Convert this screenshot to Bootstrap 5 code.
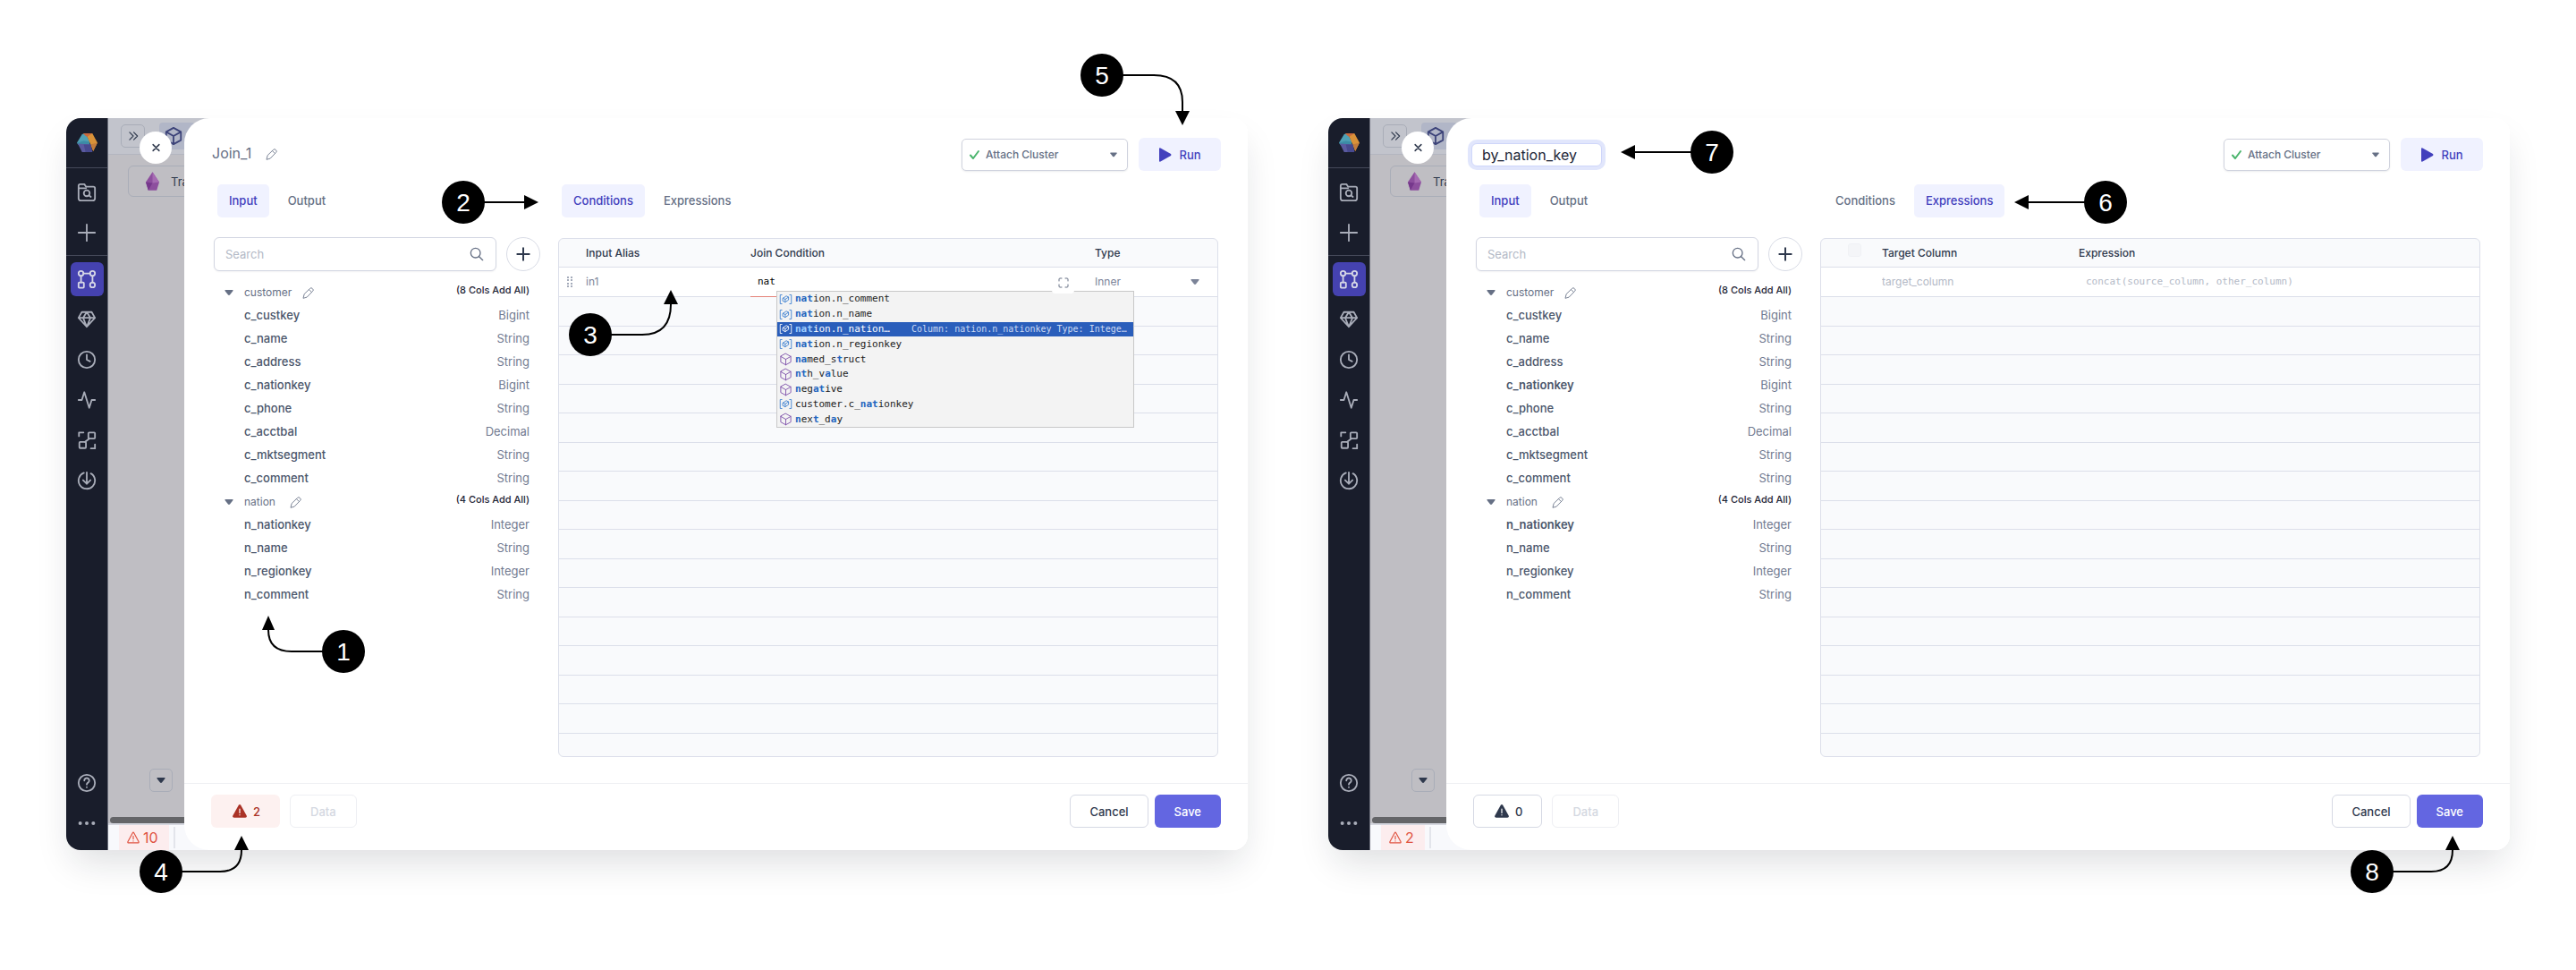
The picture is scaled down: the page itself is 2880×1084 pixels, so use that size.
<!DOCTYPE html>
<html lang="en">
<head>
<meta charset="utf-8">
<meta name="viewport" content="width=device-width, initial-scale=1">
<title>Join editor</title>
<link rel="stylesheet" href="https://cdn.jsdelivr.net/npm/bootstrap@5.3.0/dist/css/bootstrap.min.css">
<script src="https://cdn.jsdelivr.net/npm/bootstrap@5.3.0/dist/js/bootstrap.bundle.min.js"></script>
<style>
:root{--ink:#2f394d;--soft:#667085;--line:#dcdfea;--accent:#4240bd;--tint:#f0f2ff}
body{font-family:Inter,"Liberation Sans",sans-serif;font-size:13px;line-height:20px;color:var(--ink);background:#fff}
.stage{padding:132px 74px;gap:90px}
.icon{width:22px;height:22px;fill:none;stroke:currentColor;stroke-width:2;stroke-linecap:round;stroke-linejoin:round;flex:none;display:block}
.icon-sm{width:14px;height:14px}
.pen{stroke-width:1.6;width:13px;height:13px}
.caret{width:10px;height:6px;fill:currentColor;flex:none;display:block}
.win{flex:1 1 0;min-width:0;border-radius:16px;background:#fff;box-shadow:0 20px 40px -8px rgba(17,24,39,.15)}
.rail{width:47px;flex:none;background:#191d2b;border-radius:16px 0 0 16px;color:#a9adb9;border-right:1px solid #6b6e7b}
.rail section{border-bottom:1px solid #454959}
.rail .brand{height:56px}
.rail .tools{height:98px;padding-top:4px}
.rail .views{padding-top:3px}
.rail a{height:45px;color:inherit}
.rail .on{width:37px;height:38px;border-radius:6px;background:#4542b0;color:#d5d6e6}
.backdrop{width:113px;flex:none;background:#bfbec3}
.backbar{height:41px;background:#c2c4cc;border-bottom:1px solid #b3b6c0;padding:5px 0 0 14px}
.ghost{border:1px solid #a9adb8;border-radius:5px;background:transparent;color:var(--ink);padding:0}
.expand{width:27px;height:26px;margin-top:2px}
.cube{width:40px;height:30px;background:#b1b6c7;border:0;border-radius:4px;color:#3c4379;padding:0 0 0 5px}
.gem-btn{margin:12px 0 0 22px;height:35px;padding-left:19px;gap:13px;border-radius:6px}
.drop{width:26px;height:26px;margin:0 0 28px 46px}
.scroller{height:7px;border-radius:4px;background:#646568;margin-left:2px}
.status{height:30px;background:#f8f9fc;border-top:2px solid #d5d7df;font-size:16px;color:#e05341;padding-left:12px}
.status a{background:#fcedee;color:inherit;gap:4px;padding:0 12px 0 9px}
.status a .icon{width:14px;height:14px}
.status hr{width:2px;height:24px;margin:2px 0 0 5px;border:0;background:#e3e5eb;opacity:1}
.shut{left:82px;top:15px;width:36px;height:36px;background:#fff;border:0;color:var(--ink);z-index:3}
.shut .icon{width:9px;stroke-width:4}
.drawer{margin-left:-28px;background:#fff;border-radius:28px 16px 16px 28px;z-index:2}
.head{padding:22px 30px 15px 31px;height:74px}
.title{font-size:16px;color:#667085;margin:0;padding-bottom:3px;line-height:24px;font-weight:400}
.title-box{width:146px;height:26px;border:1px solid #cfd6fa;border-radius:6px;box-shadow:0 0 0 4px #e1e6fc;font-size:16px;padding:0 11px;color:#1c2536;margin-left:10px;outline:0}
.plain{border:0;background:transparent;padding:0;color:var(--soft)}
.cluster{width:186px;height:36px}
.cluster select{width:100%;height:100%;border:1px solid #d0d3de;border-radius:5px;background:#fff;appearance:none;font-size:12px;font-weight:500;color:var(--soft);padding:0 28px 0 26px;box-shadow:0 1px 2px rgba(16,24,40,.08)}
.cluster .caret{right:12px;width:8px;color:var(--soft)}
.act{height:37px;border-radius:6px;border:1px solid transparent;font-size:13px;font-weight:500;line-height:20px;padding:0 21px}
.run{width:92px;background:var(--tint);color:var(--accent);padding:0}
.save{background:#6366e1;color:#fff}
.cancel{background:#fff;border-color:#d6d9e4;color:var(--ink)}
.data{background:#fff;border-color:#eeeff3;color:#d4d8e1;padding:0 22px}
.issues{padding:0 21px 0 23px;gap:7px}
.issues-bad{background:#fdf1f0;color:#aa3226}
.tabs{gap:8px;padding-left:4px;height:37px}
.tabs a{padding:8px 13px;color:var(--soft);font-weight:500;border-radius:5px;text-decoration:none;line-height:21px}
.tabs .on{background:var(--tint);color:var(--accent)}
.main{padding:0 33px 29px;gap:20px}
.side{width:365px;flex:none}
.finder{margin-top:22px;gap:11px}
.finder input{height:38px;border:1px solid #d3d6e2;border-radius:6px;padding:0 12px;font-size:13px;box-shadow:0 1px 2px rgba(16,24,40,.05)}
.finder input::placeholder,.grid input::placeholder{color:#b3b9c6;opacity:1}
.finder .glass{right:14px;top:11px;width:16px;height:16px;color:var(--soft)}
.round{width:38px;height:38px;border:1px solid #d9dce6;background:#fff;color:var(--ink);padding:0}
.tree{margin:11px 12px 0 0;padding:0;list-style:none;color:#4b566b;font-weight:500}
.tree li{height:26px;padding-left:34px;line-height:24px}
.tree li span:last-child{color:#717a90;font-weight:400}
.tree .grp{padding-left:12px;color:var(--soft);font-size:12px;font-weight:400}
.tree .grp .plain{margin-left:12px}
.tree .grp a{color:#1f2638;font-size:11px;font-weight:500;line-height:20px;text-decoration:none;align-self:flex-start}
.tree .hit{font-weight:600}
.frame{margin-top:23px;height:580px;border:1px solid var(--line);border-radius:6px;overflow:hidden;background:#f9fafc}
.grid{width:100%;table-layout:fixed;border-collapse:separate;border-spacing:0;font-size:12px}
.grid th,.grid td{padding:0;border-bottom:1px solid var(--line)}
.grid th{height:32px;font-weight:500;color:var(--ink)}
.grid tbody tr{height:32px}
.grid tbody tr:nth-child(even){height:33px}
.grid tbody tr.live{height:33px;background:#fff;color:#7b8398}
.grid input,.grid select{border:0;background:transparent;padding:0;font-size:12px;outline:0;display:block;width:100%;color:inherit}
.grid .code,.hints{font-family:"DejaVu Sans Mono","Liberation Mono",monospace;font-size:11px}
.grid .code{padding-left:8px}
.grid .caret{margin-right:20px}
.grid .pick-all{width:15px;height:15px;margin:0 0 6px 30px;background:#f1f2f6;border:1px solid #e8eaf0}
.grid .bad{border-bottom-color:#e5837a}
.grid select{appearance:none;width:100px}
.hints{left:794px;top:193px;width:400px;height:153px;border:1px solid #c8c8c8;background:#f3f3f3;z-index:4;color:#222;line-height:16px;white-space:pre}
.hints li{flex:1 1 0;padding-left:2px}
.hints .icon{width:15px;height:15px;stroke-width:1.4;color:#3b7fd0;margin-right:3px}
.hints .fn{color:#7a4ca8}
.hints b{color:#1f66bf;font-weight:700}
.hints .pick{background:#2a5ebb;color:#fff}
.hints .pick b{color:#9dccff}
.hints .pick .icon{color:#fff}
.hints .pick em{font-style:normal;font-size:10px;color:#c9d8f2;margin-left:24px}
.grow-btn{left:1102px;top:172px;width:25px;height:24px;border-radius:4px;background:#fff;border:0;padding:0;color:#667085;z-index:5}
.foot{border-top:1px solid #eff0f3;padding:12px 30px 25px;gap:11px}
.foot .pair{gap:7px}
.note{z-index:6;width:48px;height:48px;border-radius:50%;background:#000;color:#fff;font:28px/49px "Liberation Sans",Arial,sans-serif;text-align:center}
.note svg{left:24px;top:24px;width:1px;height:1px;overflow:visible;z-index:-1;fill:none;stroke:#000;stroke-width:2}
.note polygon{fill:#000;stroke:none}
</style>
</head>
<body>
<svg width="0" height="0" class="position-absolute" aria-hidden="true">
<symbol id="logo" viewBox="0 0 24 22"><path fill="#4fa0b5" d="M6 1 10 0 15 10 10 14 1 12.500 0 11Z"/><path fill="#3c8ca6" d="M0 11 8 9 15 10 15 14 2 14Z"/><path fill="#c8683c" d="M7 0H18L15 6 10 3Z"/><path fill="#d99239" d="M18 0 24 11 19 21 16 13 12 4Z"/><path fill="#c27c3c" d="M24 11 19 21 16 13Z"/><path fill="#5a5aa0" d="M1 12 16 13 18 22H6Z"/><path fill="#47498f" d="M8 13 16 13 18 22H10Z"/></symbol>
<symbol id="folder" viewBox="0 0 24 24"><path d="M2 19V4a2 2 0 0 1 2-2h5l2 3h9a2 2 0 0 1 2 2v12a3 3 0 0 1-3 3H5a3 3 0 0 1-3-3zM2 7h9"/><circle cx="12" cy="13" r="3.600"/><path d="m14.500 15.500 2.500 2"/></symbol>
<symbol id="plus" viewBox="0 0 24 24"><path d="M12 2v20M2 12h20"/></symbol>
<symbol id="flow" viewBox="0 0 24 24"><circle cx="5" cy="5" r="3"/><circle cx="19" cy="5" r="3"/><circle cx="19" cy="19" r="3"/><rect x="2" y="16" width="6.500" height="6.500" rx="1"/><path d="M8 5h8M5 8v8M19 8v8"/></symbol>
<symbol id="diamond" viewBox="0 0 24 24"><path d="M6 3h12l4 7-10 11L2 10zM2 10h20M12 3 7.500 10 12 21l4.500-11z"/></symbol>
<symbol id="clock" viewBox="0 0 24 24"><circle cx="12" cy="12" r="10"/><path d="M12 6v6l4 2"/></symbol>
<symbol id="pulse" viewBox="0 0 24 24"><path d="M2 12h4L9 2.500l6 19L18 12h4"/></symbol>
<symbol id="lineage" viewBox="0 0 24 24"><rect x="14" y="2.500" width="8" height="7.500" rx="1"/><rect x="3" y="14" width="8" height="7.500" rx="1"/><path d="m10 14 5-4M2.500 7V2.500H8M22 17v5h-5"/></symbol>
<symbol id="down" viewBox="0 0 24 24"><path d="M8.500 2.700A10 10 0 1 0 17 3.400M12 2v14M7.500 11.500 12 16l4.500-4.500"/></symbol>
<symbol id="help" viewBox="0 0 24 24"><circle cx="12" cy="12" r="10"/><path d="M9 9a3 3 0 1 1 4.500 2.600c-1 .6-1.500 1-1.500 2.200M12 17.200v.1"/></symbol>
<symbol id="dots" viewBox="0 0 24 24"><g fill="currentColor" stroke="none"><circle cx="4" cy="12" r="2.200"/><circle cx="12" cy="12" r="2.200"/><circle cx="20" cy="12" r="2.200"/></g></symbol>
<symbol id="chev" viewBox="0 0 24 24"><path d="m5 5 7 7-7 7M13 5l7 7-7 7"/></symbol>
<symbol id="box" viewBox="0 0 24 24"><path d="M12 2 21 7v10l-9 5-9-5V7zM3 7l9 5 9-5M12 12v10"/></symbol>
<symbol id="cross" viewBox="0 0 24 24"><path d="m3 3 18 18M21 3 3 21"/></symbol>
<symbol id="gem" viewBox="0 0 16 22"><path fill="#8d4f9e" d="M8 0 0 12l3 10h10l3-10z"/><path fill="#a56bb2" d="M8 0v13l8-1z"/><path fill="#76388c" d="m0 12 8 1-5 9z"/></symbol>
<symbol id="pencil" viewBox="0 0 24 24"><path d="m2 22 2-8L16 2.500a3 3 0 0 1 4.500 0l1 1a3 3 0 0 1 0 4.500L10 20zM14 5l5 5"/></symbol>
<symbol id="glass" viewBox="0 0 24 24"><circle cx="10" cy="10" r="8"/><path d="m16 16 6 6"/></symbol>
<symbol id="caret" viewBox="0 0 10 6"><path d="M1 0h8q1 0 .5 1L6 5.500q-1 .8-2 0L.5 1Q0 0 1 0z"/></symbol>
<symbol id="tick" viewBox="0 0 12 12"><path d="m1.500 6.500 3 3.500L10.500 2"/></symbol>
<symbol id="warn" viewBox="0 0 16 15"><path fill="currentColor" stroke="none" d="M6.800.8q1.200-1.600 2.400 0l6.500 11.700q.8 2-1.400 2.200H1.700Q-.5 14.500.3 12.500z"/><path stroke="#fff" stroke-width="1.200" d="M8 5v4.500M8 11.600v.2"/></symbol>
<symbol id="alert" viewBox="0 0 24 24"><path d="M10.800 3q1.200-2 2.400 0l9.300 17q.5 2-1.500 2H3q-2 0-1.500-2zM12 9v6M12 18.500v.2"/></symbol>
<symbol id="field" viewBox="0 0 24 24"><path d="M5 4H2v16h3M19 4h3v16h-3M7 10l6-4 4 2v5l-6 4-4-2zM7 10l4 2 6-4M11 12v5"/></symbol>
<symbol id="full" viewBox="0 0 24 24"><path d="M2 8V4q0-2 2-2h4M16 2h4q2 0 2 2v4M22 16v4q0 2-2 2h-4M8 22H4q-2 0-2-2v-4"/></symbol>
</svg>

<main class="stage d-flex">

<article class="win position-relative d-flex">
  <nav class="rail d-flex flex-column" aria-label="Main">
    <section class="brand d-flex align-items-center justify-content-center"><svg width="23" height="21"><use href="#logo"/></svg></section>
    <section class="tools">
      <a href="#" aria-label="Browse" class="d-flex align-items-center justify-content-center"><svg class="icon"><use href="#folder"/></svg></a>
      <a href="#" aria-label="Create" class="d-flex align-items-center justify-content-center"><svg class="icon"><use href="#plus"/></svg></a>
    </section>
    <div class="views">
      <a href="#" aria-label="Pipelines" class="d-flex align-items-center justify-content-center"><span class="on d-flex align-items-center justify-content-center"><svg class="icon"><use href="#flow"/></svg></span></a>
      <a href="#" aria-label="Gems" class="d-flex align-items-center justify-content-center"><svg class="icon"><use href="#diamond"/></svg></a>
      <a href="#" aria-label="Jobs" class="d-flex align-items-center justify-content-center"><svg class="icon"><use href="#clock"/></svg></a>
      <a href="#" aria-label="Monitoring" class="d-flex align-items-center justify-content-center"><svg class="icon"><use href="#pulse"/></svg></a>
      <a href="#" aria-label="Lineage" class="d-flex align-items-center justify-content-center"><svg class="icon"><use href="#lineage"/></svg></a>
      <a href="#" aria-label="Import" class="d-flex align-items-center justify-content-center"><svg class="icon"><use href="#down"/></svg></a>
    </div>
    <div class="mt-auto pb-2">
      <a href="#" aria-label="Help" class="d-flex align-items-center justify-content-center"><svg class="icon"><use href="#help"/></svg></a>
      <a href="#" aria-label="More" class="d-flex align-items-center justify-content-center"><svg class="icon"><use href="#dots"/></svg></a>
    </div>
  </nav>
  <div class="backdrop d-flex flex-column">
    <div class="backbar d-flex align-items-start gap-3">
      <button class="ghost expand d-flex align-items-center justify-content-center" aria-label="Expand"><svg class="icon icon-sm"><use href="#chev"/></svg></button>
      <button class="cube" aria-label="Project"><svg class="icon"><use href="#box"/></svg></button>
    </div>
    <button class="ghost gem-btn d-flex align-items-center"><svg width="15" height="21"><use href="#gem"/></svg>Tra</button>
    <button class="ghost drop mt-auto d-flex align-items-center justify-content-center" aria-label="Collapse"><svg class="caret"><use href="#caret"/></svg></button>
    <div class="scroller"></div>
    <div class="status d-flex"><a href="#" class="d-flex align-items-center text-decoration-none"><svg class="icon"><use href="#alert"/></svg>10</a><hr></div>
  </div>
  <button class="shut position-absolute rounded-circle d-flex align-items-center justify-content-center" aria-label="Close"><svg class="icon"><use href="#cross"/></svg></button>

  <section class="drawer flex-fill d-flex flex-column position-relative">
    <header class="head d-flex align-items-center">
      <h1 class="title">Join_1</h1>
      <button class="plain ms-3" aria-label="Rename"><svg class="icon pen"><use href="#pencil"/></svg></button>
      <div class="cluster position-relative ms-auto me-2">
        <select aria-label="Cluster"><option>Attach Cluster</option></select>
        <svg class="icon position-absolute top-50 start-0 translate-middle-y ms-2" style="width:13px;height:12px;color:#4bb56d"><use href="#tick"/></svg>
        <svg class="caret position-absolute top-50 translate-middle-y"><use href="#caret"/></svg>
      </div>
      <button class="act run d-flex align-items-center justify-content-center gap-2 ms-1"><svg width="15" height="16" viewBox="0 0 15 16" fill="currentColor"><path d="M1 1q0-1 1.500-.6L14 7q1 1 0 2L2.500 15.600Q1 16 1 15z"/></svg>Run</button>
    </header>
    <div class="main d-flex">
      <div class="side">
        <div class="tabs d-flex"><a href="#" class="on">Input</a><a href="#">Output</a></div>
        <div class="finder d-flex">
          <div class="position-relative flex-fill"><input type="search" class="w-100" placeholder="Search" aria-label="Search columns"><svg class="icon glass position-absolute"><use href="#glass"/></svg></div>
          <button class="round rounded-circle d-flex align-items-center justify-content-center" aria-label="Add input"><svg class="icon" style="width:16px;height:16px;stroke-width:3"><use href="#plus"/></svg></button>
        </div>
        <ul class="tree">
          <li class="grp d-flex align-items-center"><svg class="caret me-2"><use href="#caret"/></svg><span class="me-auto ps-1 d-flex align-items-center">customer<button class="plain" aria-label="Rename customer"><svg class="icon pen"><use href="#pencil"/></svg></button></span><a href="#">(8 Cols Add All)</a></li>
          <li class="d-flex justify-content-between"><span>c_custkey</span><span>Bigint</span></li>
          <li class="d-flex justify-content-between"><span>c_name</span><span>String</span></li>
          <li class="d-flex justify-content-between"><span>c_address</span><span>String</span></li>
          <li class="d-flex justify-content-between"><span>c_nationkey</span><span>Bigint</span></li>
          <li class="d-flex justify-content-between"><span>c_phone</span><span>String</span></li>
          <li class="d-flex justify-content-between"><span>c_acctbal</span><span>Decimal</span></li>
          <li class="d-flex justify-content-between"><span>c_mktsegment</span><span>String</span></li>
          <li class="d-flex justify-content-between"><span>c_comment</span><span>String</span></li>
          <li class="grp d-flex align-items-center"><svg class="caret me-2"><use href="#caret"/></svg><span class="me-auto ps-1 d-flex align-items-center">nation<button class="plain ms-3" aria-label="Rename nation"><svg class="icon pen"><use href="#pencil"/></svg></button></span><a href="#">(4 Cols Add All)</a></li>
          <li class="d-flex justify-content-between"><span>n_nationkey</span><span>Integer</span></li>
          <li class="d-flex justify-content-between"><span>n_name</span><span>String</span></li>
          <li class="d-flex justify-content-between"><span>n_regionkey</span><span>Integer</span></li>
          <li class="d-flex justify-content-between"><span>n_comment</span><span>String</span></li>
        </ul>
      </div>
      <div class="flex-fill">
        <div class="tabs d-flex"><a href="#" class="on">Conditions</a><a href="#">Expressions</a></div>
        <div class="frame">
          <table class="grid">
            <colgroup><col style="width:30px"><col style="width:184px"><col><col style="width:137px"></colgroup>
            <thead><tr><th></th><th>Input Alias</th><th>Join Condition</th><th>Type</th></tr></thead>
            <tbody>
              <tr class="live"><td><svg class="d-block ms-2" width="8" height="12" fill="#a4abba"><path d="M1 0h2v2H1zM5 0h2v2H5zM1 3h2v2H1zM5 3h2v2H5zM1 7h2v2H1zM5 7h2v2H5zM1 10h2v2H1zM5 10h2v2H5z"/></svg></td><td>in1</td><td class="bad"><input class="code text-black" value="nat" aria-label="Join condition"></td><td><div class="d-flex align-items-center justify-content-between"><select aria-label="Join type"><option>Inner</option></select><svg class="caret"><use href="#caret"/></svg></div></td></tr>
              <tr><td colspan="4"></td></tr><tr><td colspan="4"></td></tr><tr><td colspan="4"></td></tr><tr><td colspan="4"></td></tr>
              <tr><td colspan="4"></td></tr><tr><td colspan="4"></td></tr><tr><td colspan="4"></td></tr><tr><td colspan="4"></td></tr>
              <tr><td colspan="4"></td></tr><tr><td colspan="4"></td></tr><tr><td colspan="4"></td></tr><tr><td colspan="4"></td></tr>
              <tr><td colspan="4"></td></tr><tr><td colspan="4"></td></tr><tr><td colspan="4"></td></tr>
            </tbody>
          </table>
        </div>
      </div>
    </div>
    <footer class="foot d-flex mt-auto">
      <button class="act issues issues-bad d-flex align-items-center"><svg class="icon" style="width:16px;height:15px"><use href="#warn"/></svg>2</button>
      <button class="act data" disabled>Data</button>
      <div class="pair d-flex ms-auto"><button class="act cancel">Cancel</button><button class="act save">Save</button></div>
    </footer>
  </section>

  <button class="grow-btn position-absolute d-flex align-items-center justify-content-center" aria-label="Expand editor"><svg class="icon" style="width:12px;height:12px"><use href="#full"/></svg></button>
  <ul class="hints position-absolute d-flex flex-column list-unstyled m-0">
    <li class="d-flex align-items-center"><svg class="icon"><use href="#field"/></svg><span><b>nat</b>ion.n_comment</span></li>
    <li class="d-flex align-items-center"><svg class="icon"><use href="#field"/></svg><span><b>nat</b>ion.n_name</span></li>
    <li class="pick d-flex align-items-center"><svg class="icon"><use href="#field"/></svg><span><b>nat</b>ion.n_nation…</span><em>Column: nation.n_nationkey Type: Intege…</em></li>
    <li class="d-flex align-items-center"><svg class="icon"><use href="#field"/></svg><span><b>nat</b>ion.n_regionkey</span></li>
    <li class="d-flex align-items-center"><svg class="icon fn"><use href="#box"/></svg><span><b>na</b>med_s<b>t</b>ruct</span></li>
    <li class="d-flex align-items-center"><svg class="icon fn"><use href="#box"/></svg><span><b>nt</b>h_v<b>a</b>lue</span></li>
    <li class="d-flex align-items-center"><svg class="icon fn"><use href="#box"/></svg><span><b>n</b>eg<b>at</b>ive</span></li>
    <li class="d-flex align-items-center"><svg class="icon"><use href="#field"/></svg><span>customer.c_<b>nat</b>ionkey</span></li>
    <li class="d-flex align-items-center"><svg class="icon fn"><use href="#box"/></svg><span><b>n</b>ex<b>t</b>_d<b>a</b>y</span></li>
  </ul>

  <div class="note position-absolute" style="left:286px;top:572px">1<svg class="position-absolute"><path d="M-20 0H-58Q-84 0-84-24"/><polygon points="-84,-40 -91,-24 -77,-24"/></svg></div>
  <div class="note position-absolute" style="left:420px;top:70px">2<svg class="position-absolute"><path d="M20 0H70"/><polygon points="84,0 68,-8 68,8"/></svg></div>
  <div class="note position-absolute" style="left:562px;top:218px">3<svg class="position-absolute"><path d="M20 0H58Q90 0 90-34"/><polygon points="90,-50 82,-34 98,-34"/></svg></div>
  <div class="note position-absolute" style="left:82px;top:818px">4<svg class="position-absolute"><path d="M20 0H66Q90 0 90-24"/><polygon points="90,-40 82,-24 98,-24"/></svg></div>
  <div class="note position-absolute" style="right:139px;top:-72px">5<svg class="position-absolute"><path d="M20 0H58Q90 0 90 30V42"/><polygon points="90,56 82,40 98,40"/></svg></div>
</article>

<article class="win position-relative d-flex">
  <nav class="rail d-flex flex-column" aria-label="Main">
    <section class="brand d-flex align-items-center justify-content-center"><svg width="23" height="21"><use href="#logo"/></svg></section>
    <section class="tools">
      <a href="#" aria-label="Browse" class="d-flex align-items-center justify-content-center"><svg class="icon"><use href="#folder"/></svg></a>
      <a href="#" aria-label="Create" class="d-flex align-items-center justify-content-center"><svg class="icon"><use href="#plus"/></svg></a>
    </section>
    <div class="views">
      <a href="#" aria-label="Pipelines" class="d-flex align-items-center justify-content-center"><span class="on d-flex align-items-center justify-content-center"><svg class="icon"><use href="#flow"/></svg></span></a>
      <a href="#" aria-label="Gems" class="d-flex align-items-center justify-content-center"><svg class="icon"><use href="#diamond"/></svg></a>
      <a href="#" aria-label="Jobs" class="d-flex align-items-center justify-content-center"><svg class="icon"><use href="#clock"/></svg></a>
      <a href="#" aria-label="Monitoring" class="d-flex align-items-center justify-content-center"><svg class="icon"><use href="#pulse"/></svg></a>
      <a href="#" aria-label="Lineage" class="d-flex align-items-center justify-content-center"><svg class="icon"><use href="#lineage"/></svg></a>
      <a href="#" aria-label="Import" class="d-flex align-items-center justify-content-center"><svg class="icon"><use href="#down"/></svg></a>
    </div>
    <div class="mt-auto pb-2">
      <a href="#" aria-label="Help" class="d-flex align-items-center justify-content-center"><svg class="icon"><use href="#help"/></svg></a>
      <a href="#" aria-label="More" class="d-flex align-items-center justify-content-center"><svg class="icon"><use href="#dots"/></svg></a>
    </div>
  </nav>
  <div class="backdrop d-flex flex-column">
    <div class="backbar d-flex align-items-start gap-3">
      <button class="ghost expand d-flex align-items-center justify-content-center" aria-label="Expand"><svg class="icon icon-sm"><use href="#chev"/></svg></button>
      <button class="cube" aria-label="Project"><svg class="icon"><use href="#box"/></svg></button>
    </div>
    <button class="ghost gem-btn d-flex align-items-center"><svg width="15" height="21"><use href="#gem"/></svg>Tra</button>
    <button class="ghost drop mt-auto d-flex align-items-center justify-content-center" aria-label="Collapse"><svg class="caret"><use href="#caret"/></svg></button>
    <div class="scroller"></div>
    <div class="status d-flex"><a href="#" class="d-flex align-items-center text-decoration-none"><svg class="icon"><use href="#alert"/></svg>2</a><hr></div>
  </div>
  <button class="shut position-absolute rounded-circle d-flex align-items-center justify-content-center" aria-label="Close"><svg class="icon"><use href="#cross"/></svg></button>

  <section class="drawer flex-fill d-flex flex-column position-relative">
    <header class="head d-flex align-items-center ps-4">
      <input class="title-box ms-1" value="by_nation_key" aria-label="Component name">
      <div class="cluster position-relative ms-auto me-2">
        <select aria-label="Cluster"><option>Attach Cluster</option></select>
        <svg class="icon position-absolute top-50 start-0 translate-middle-y ms-2" style="width:13px;height:12px;color:#4bb56d"><use href="#tick"/></svg>
        <svg class="caret position-absolute top-50 translate-middle-y"><use href="#caret"/></svg>
      </div>
      <button class="act run d-flex align-items-center justify-content-center gap-2 ms-1"><svg width="15" height="16" viewBox="0 0 15 16" fill="currentColor"><path d="M1 1q0-1 1.500-.6L14 7q1 1 0 2L2.500 15.600Q1 16 1 15z"/></svg>Run</button>
    </header>
    <div class="main d-flex">
      <div class="side">
        <div class="tabs d-flex"><a href="#" class="on">Input</a><a href="#">Output</a></div>
        <div class="finder d-flex">
          <div class="position-relative flex-fill"><input type="search" class="w-100" placeholder="Search" aria-label="Search columns"><svg class="icon glass position-absolute"><use href="#glass"/></svg></div>
          <button class="round rounded-circle d-flex align-items-center justify-content-center" aria-label="Add input"><svg class="icon" style="width:16px;height:16px;stroke-width:3"><use href="#plus"/></svg></button>
        </div>
        <ul class="tree">
          <li class="grp d-flex align-items-center"><svg class="caret me-2"><use href="#caret"/></svg><span class="me-auto ps-1 d-flex align-items-center">customer<button class="plain" aria-label="Rename customer"><svg class="icon pen"><use href="#pencil"/></svg></button></span><a href="#">(8 Cols Add All)</a></li>
          <li class="d-flex justify-content-between"><span>c_custkey</span><span>Bigint</span></li>
          <li class="d-flex justify-content-between"><span>c_name</span><span>String</span></li>
          <li class="d-flex justify-content-between"><span>c_address</span><span>String</span></li>
          <li class="d-flex justify-content-between hit"><span>c_nationkey</span><span>Bigint</span></li>
          <li class="d-flex justify-content-between"><span>c_phone</span><span>String</span></li>
          <li class="d-flex justify-content-between"><span>c_acctbal</span><span>Decimal</span></li>
          <li class="d-flex justify-content-between"><span>c_mktsegment</span><span>String</span></li>
          <li class="d-flex justify-content-between"><span>c_comment</span><span>String</span></li>
          <li class="grp d-flex align-items-center"><svg class="caret me-2"><use href="#caret"/></svg><span class="me-auto ps-1 d-flex align-items-center">nation<button class="plain ms-3" aria-label="Rename nation"><svg class="icon pen"><use href="#pencil"/></svg></button></span><a href="#">(4 Cols Add All)</a></li>
          <li class="d-flex justify-content-between hit"><span>n_nationkey</span><span>Integer</span></li>
          <li class="d-flex justify-content-between"><span>n_name</span><span>String</span></li>
          <li class="d-flex justify-content-between"><span>n_regionkey</span><span>Integer</span></li>
          <li class="d-flex justify-content-between"><span>n_comment</span><span>String</span></li>
        </ul>
      </div>
      <div class="flex-fill">
        <div class="tabs d-flex"><a href="#">Conditions</a><a href="#" class="on">Expressions</a></div>
        <div class="frame">
          <table class="grid">
            <colgroup><col style="width:68px"><col style="width:220px"><col></colgroup>
            <thead><tr><th><input type="checkbox" class="form-check-input pick-all" aria-label="Select all" disabled></th><th>Target Column</th><th>Expression</th></tr></thead>
            <tbody>
              <tr class="live"><td></td><td><input placeholder="target_column" aria-label="Target column"></td><td><input class="code" placeholder="concat(source_column, other_column)" aria-label="Expression"></td></tr>
              <tr><td colspan="3"></td></tr><tr><td colspan="3"></td></tr><tr><td colspan="3"></td></tr><tr><td colspan="3"></td></tr>
              <tr><td colspan="3"></td></tr><tr><td colspan="3"></td></tr><tr><td colspan="3"></td></tr><tr><td colspan="3"></td></tr>
              <tr><td colspan="3"></td></tr><tr><td colspan="3"></td></tr><tr><td colspan="3"></td></tr><tr><td colspan="3"></td></tr>
              <tr><td colspan="3"></td></tr><tr><td colspan="3"></td></tr><tr><td colspan="3"></td></tr>
            </tbody>
          </table>
        </div>
      </div>
    </div>
    <footer class="foot d-flex mt-auto">
      <button class="act issues cancel d-flex align-items-center"><svg class="icon" style="width:16px;height:15px"><use href="#warn"/></svg>0</button>
      <button class="act data" disabled>Data</button>
      <div class="pair d-flex ms-auto"><button class="act cancel">Cancel</button><button class="act save">Save</button></div>
    </footer>
  </section>

  <div class="note position-absolute" style="left:845px;top:70px">6<svg class="position-absolute"><path d="M-20 0H-90"/><polygon points="-102,0 -86,-8 -86,8"/></svg></div>
  <div class="note position-absolute" style="left:405px;top:14px">7<svg class="position-absolute"><path d="M-20 0H-90"/><polygon points="-102,0 -86,-8 -86,8"/></svg></div>
  <div class="note position-absolute" style="right:130px;top:818px">8<svg class="position-absolute"><path d="M20 0H66Q90 0 90-24"/><polygon points="90,-40 82,-24 98,-24"/></svg></div>
</article>
</main>
</body>
</html>
